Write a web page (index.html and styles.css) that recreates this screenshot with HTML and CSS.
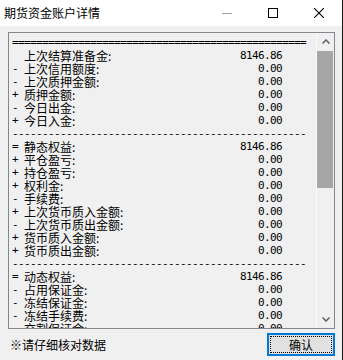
FILE: index.html
```html
<!DOCTYPE html>
<html lang="zh-CN">
<head>
  <meta charset="UTF-8">
  <title>期货资金账户详情</title>
  <link rel="stylesheet" href="styles.css">
</head>
<body>
  <div class="window">
    <div class="titlebar">
      <span class="title">期货资金账户详情</span>
      <div class="cap">
        <svg width="10" height="10" viewBox="0 0 10 10"><line x1="0" y1="5.5" x2="10" y2="5.5" stroke="#a0a0a0" stroke-width="1"/></svg>
      </div>
      <div class="cap">
        <svg width="10" height="10" viewBox="0 0 10 10"><rect x="0.5" y="0.5" width="9" height="9" fill="none" stroke="#000" stroke-width="1"/></svg>
      </div>
      <div class="cap">
        <svg width="10" height="10" viewBox="0 0 10 10"><path d="M0 0 L10 10 M10 0 L0 10" stroke="#000" stroke-width="1.1"/></svg>
      </div>
    </div>

    <div class="client">
      <div class="listbox">
        <div class="lines">
          <div class="rule">=================================================</div>
          <div class="row"><span class="sign"></span><span class="label">上次结算准备金:</span><span class="val">8146.86</span></div>
          <div class="row"><span class="sign">-</span><span class="label">上次信用额度:</span><span class="val">0.00</span></div>
          <div class="row"><span class="sign">-</span><span class="label">上次质押金额:</span><span class="val">0.00</span></div>
          <div class="row"><span class="sign">+</span><span class="label">质押金额:</span><span class="val">0.00</span></div>
          <div class="row"><span class="sign">-</span><span class="label">今日出金:</span><span class="val">0.00</span></div>
          <div class="row"><span class="sign">+</span><span class="label">今日入金:</span><span class="val">0.00</span></div>
          <div class="rule">-------------------------------------------------</div>
          <div class="row"><span class="sign">=</span><span class="label">静态权益:</span><span class="val">8146.86</span></div>
          <div class="row"><span class="sign">+</span><span class="label">平仓盈亏:</span><span class="val">0.00</span></div>
          <div class="row"><span class="sign">+</span><span class="label">持仓盈亏:</span><span class="val">0.00</span></div>
          <div class="row"><span class="sign">+</span><span class="label">权利金:</span><span class="val">0.00</span></div>
          <div class="row"><span class="sign">-</span><span class="label">手续费:</span><span class="val">0.00</span></div>
          <div class="row"><span class="sign">+</span><span class="label">上次货币质入金额:</span><span class="val">0.00</span></div>
          <div class="row"><span class="sign">-</span><span class="label">上次货币质出金额:</span><span class="val">0.00</span></div>
          <div class="row"><span class="sign">+</span><span class="label">货币质入金额:</span><span class="val">0.00</span></div>
          <div class="row"><span class="sign">+</span><span class="label">货币质出金额:</span><span class="val">0.00</span></div>
          <div class="rule">-------------------------------------------------</div>
          <div class="row"><span class="sign">=</span><span class="label">动态权益:</span><span class="val">8146.86</span></div>
          <div class="row"><span class="sign">-</span><span class="label">占用保证金:</span><span class="val">0.00</span></div>
          <div class="row"><span class="sign">-</span><span class="label">冻结保证金:</span><span class="val">0.00</span></div>
          <div class="row"><span class="sign">-</span><span class="label">冻结手续费:</span><span class="val">0.00</span></div>
          <div class="row"><span class="sign">-</span><span class="label">交割保证金:</span><span class="val">0.00</span></div>
        </div>
        <div class="scrollbar">
          <div class="sb-btn">
            <svg width="8" height="5" viewBox="0 0 8 5"><polyline points="0.5,4.5 4,1 7.5,4.5" fill="none" stroke="#606060" stroke-width="1.5"/></svg>
          </div>
          <div class="thumb"></div>
          <div class="track"></div>
          <div class="sb-btn">
            <svg width="8" height="5" viewBox="0 0 8 5"><polyline points="0.5,0.5 4,4 7.5,0.5" fill="none" stroke="#606060" stroke-width="1.5"/></svg>
          </div>
        </div>
      </div>

      <div class="footer">
        <span class="note">※请仔细核对数据</span>
        <button class="ok">确认</button>
      </div>
    </div>
  </div>
</body>
</html>
```

FILE: styles.css
```css
body {
  margin: 0;
  background: #151515;
  font-family: "Noto Sans CJK SC", sans-serif;
  font-size: 12px;
  color: #000;
}
.window {
  width: 342px;
  height: 360px;
  background: #f0f0f0;
  display: flex;
  flex-direction: column;
  overflow: hidden;
}
.titlebar {
  height: 26px;
  flex-shrink: 0;
  background: #fff;
  display: flex;
  align-items: center;
}
.title {
  flex: 1;
  padding-left: 4px;
  line-height: 26px;
}
.cap {
  width: 46px;
  height: 26px;
  display: flex;
  align-items: center;
  justify-content: center;
}
.client {
  padding: 6px 7px 0 8px;
}
.listbox {
  height: 297px;
  box-sizing: border-box;
  border: 1px solid #828790;
  display: flex;
}
.lines {
  flex: 1;
  overflow: hidden;
  padding: 3px 0 0 3px;
  line-height: 13px;
}
.rule {
  font-family: "DejaVu Sans Mono", monospace;
  font-size: 11px;
  letter-spacing: -0.62px;
  white-space: nowrap;
  height: 13px;
}
.row {
  width: 270px;
  height: 13px;
  display: flex;
  white-space: nowrap;
}
.sign {
  width: 12px;
  font-family: "DejaVu Sans Mono", monospace;
  font-size: 11px;
}
.val {
  margin-left: auto;
  font-family: "DejaVu Sans Mono", monospace;
  font-size: 11px;
  letter-spacing: -0.62px;
}
.scrollbar {
  width: 17px;
  border-left: 1px solid #fafafa;
  display: flex;
  flex-direction: column;
}
.sb-btn {
  height: 17px;
  display: flex;
  align-items: center;
  justify-content: center;
}
.thumb {
  height: 137px;
  margin: 1px 1px 0 0;
  background: #a6a6a6;
}
.track {
  flex: 1;
}
.footer {
  margin-top: 4px;
  display: flex;
  align-items: center;
  justify-content: space-between;
}
.note {
  padding-left: 2px;
}
.ok {
  width: 68px;
  height: 23px;
  border: 2px solid #0078d7;
  background: #e1e1e1;
  outline: 1px dotted #000;
  outline-offset: -4px;
  font-family: "Noto Sans CJK SC", sans-serif;
  font-size: 12px;
  padding: 0;
  color: #000;
}
```
